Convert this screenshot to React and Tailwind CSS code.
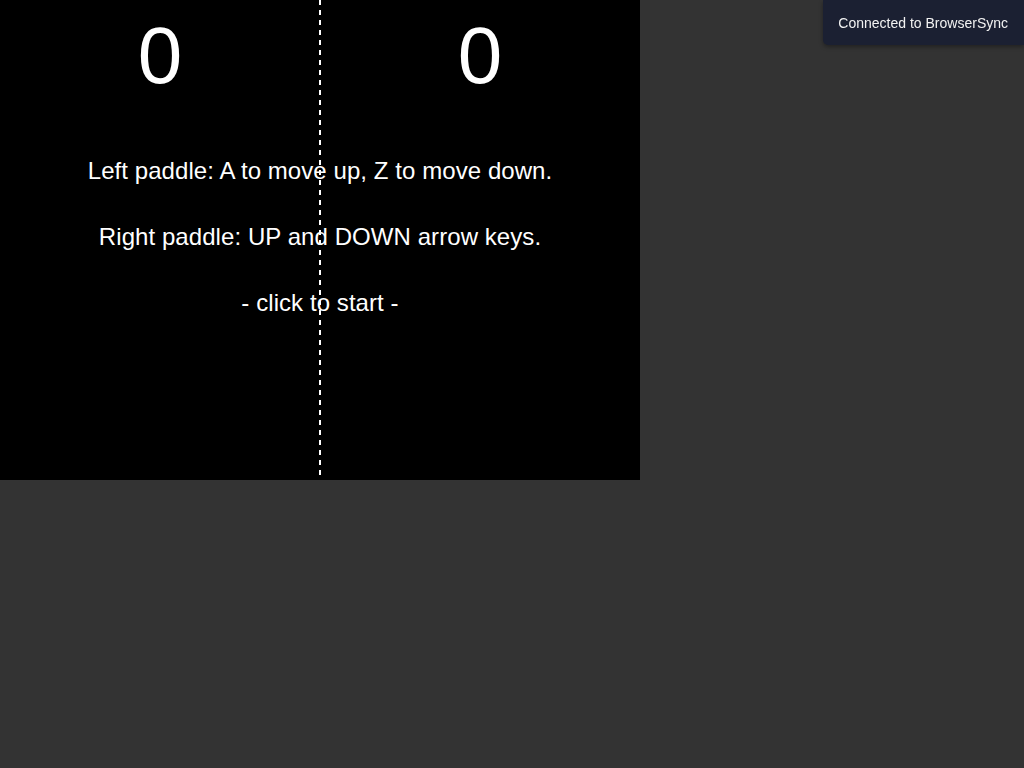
import React from 'react';

const LINES = [
  'Left paddle: A to move up, Z to move down.',
  'Right paddle: UP and DOWN arrow keys.',
  '- click to start -'
];

const CenterLine = () => (
  <svg className="absolute left-[319px] top-0" width="2" height="480" viewBox="0 0 2 480">
    <line x1="1" y1="0" x2="1" y2="480" stroke="#ffffff" strokeWidth="2" strokeDasharray="5 5" />
  </svg>
);

export default function App() {
  return (
    <div className="min-h-screen w-full bg-[#333333] font-['Liberation_Sans',Arial,sans-serif]">
      <div className="relative w-[640px] h-[480px] bg-black text-white">
        <div className="grid grid-cols-2 pt-4">
          <div className="text-center text-[80px] leading-none">0</div>
          <div className="text-center text-[80px] leading-none">0</div>
        </div>
        <div className="mt-[42px] flex flex-col items-center">
          {LINES.map(l => (
            <div key={l} className="text-[24px] leading-[66px] whitespace-nowrap tracking-[0.07px]">{l}</div>
          ))}
        </div>
        <CenterLine />
      </div>

      <div className="fixed top-0 right-0 bg-[#1B2032] text-[#f2f2f2] text-[14px] leading-[16px] pl-[15px] pr-[16px] pt-[15px] pb-[14px] rounded-bl-[5px] shadow-[0_2px_4px_rgba(0,0,0,0.35)]">
        Connected to BrowserSync
      </div>
    </div>
  );
}
